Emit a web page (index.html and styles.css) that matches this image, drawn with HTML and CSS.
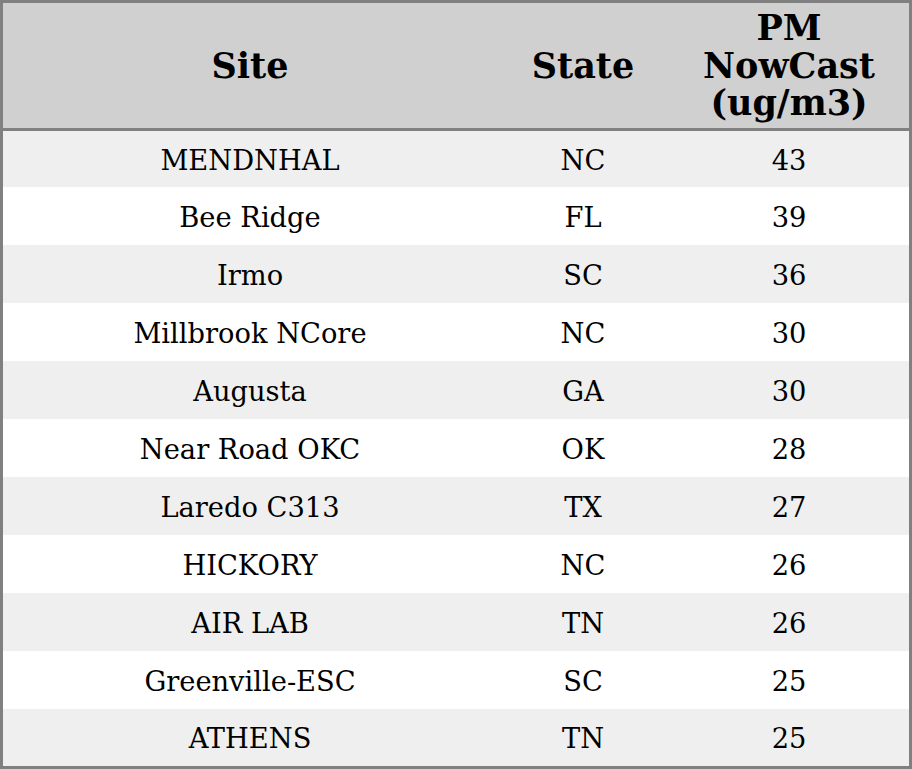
FILE: index.html
```html
<!DOCTYPE html>
<html>
<head>
<meta charset="utf-8">
<link rel="stylesheet" href="styles.css">
</head>
<body>
<table class="aq">
  <colgroup>
    <col class="c-site">
    <col class="c-state">
    <col class="c-pm">
  </colgroup>
  <thead>
    <tr><th>Site</th><th>State</th><th>PM<br>NowCast<br>(ug/m3)</th></tr>
  </thead>
  <tbody>
    <tr><td>MENDNHAL</td><td>NC</td><td>43</td></tr>
    <tr><td>Bee Ridge</td><td>FL</td><td>39</td></tr>
    <tr><td>Irmo</td><td>SC</td><td>36</td></tr>
    <tr><td>Millbrook NCore</td><td>NC</td><td>30</td></tr>
    <tr><td>Augusta</td><td>GA</td><td>30</td></tr>
    <tr><td>Near Road OKC</td><td>OK</td><td>28</td></tr>
    <tr><td>Laredo C313</td><td>TX</td><td>27</td></tr>
    <tr><td>HICKORY</td><td>NC</td><td>26</td></tr>
    <tr><td>AIR LAB</td><td>TN</td><td>26</td></tr>
    <tr><td>Greenville-ESC</td><td>SC</td><td>25</td></tr>
    <tr><td>ATHENS</td><td>TN</td><td>25</td></tr>
  </tbody>
</table>
</body>
</html>
```
FILE: styles.css
```css
html, body {
  margin: 0;
  padding: 0;
  background: #ffffff;
}
.aq {
  width: 912px;
  height: 769px;
  border-collapse: separate;
  border-spacing: 0;
  border: 3px solid #808080;
  box-sizing: border-box;
  table-layout: fixed;
  font-family: "DejaVu Serif", serif;
  color: #000;
}
.c-site { width: 494px; }
.c-state { width: 172px; }
.c-pm { width: 240px; }
.aq th {
  background: #d0d0d0;
  font-size: 35px;
  font-weight: bold;
  line-height: 37.5px;
  height: 125px;
  padding: 0;
  border-bottom: 3px solid #808080;
  text-align: center;
  vertical-align: middle;
}
.aq td {
  font-size: 27.3px;
  height: 58px;
  padding: 2px 0 0 0;
  box-sizing: border-box;
  text-align: center;
  vertical-align: middle;
}
.aq tbody tr:first-child td { height: 56px; }
.aq tbody tr:last-child td { height: 57px; }
.aq tbody tr:nth-child(odd) td { background: #efefef; }
.aq tbody tr:nth-child(even) td { background: #ffffff; }
```
